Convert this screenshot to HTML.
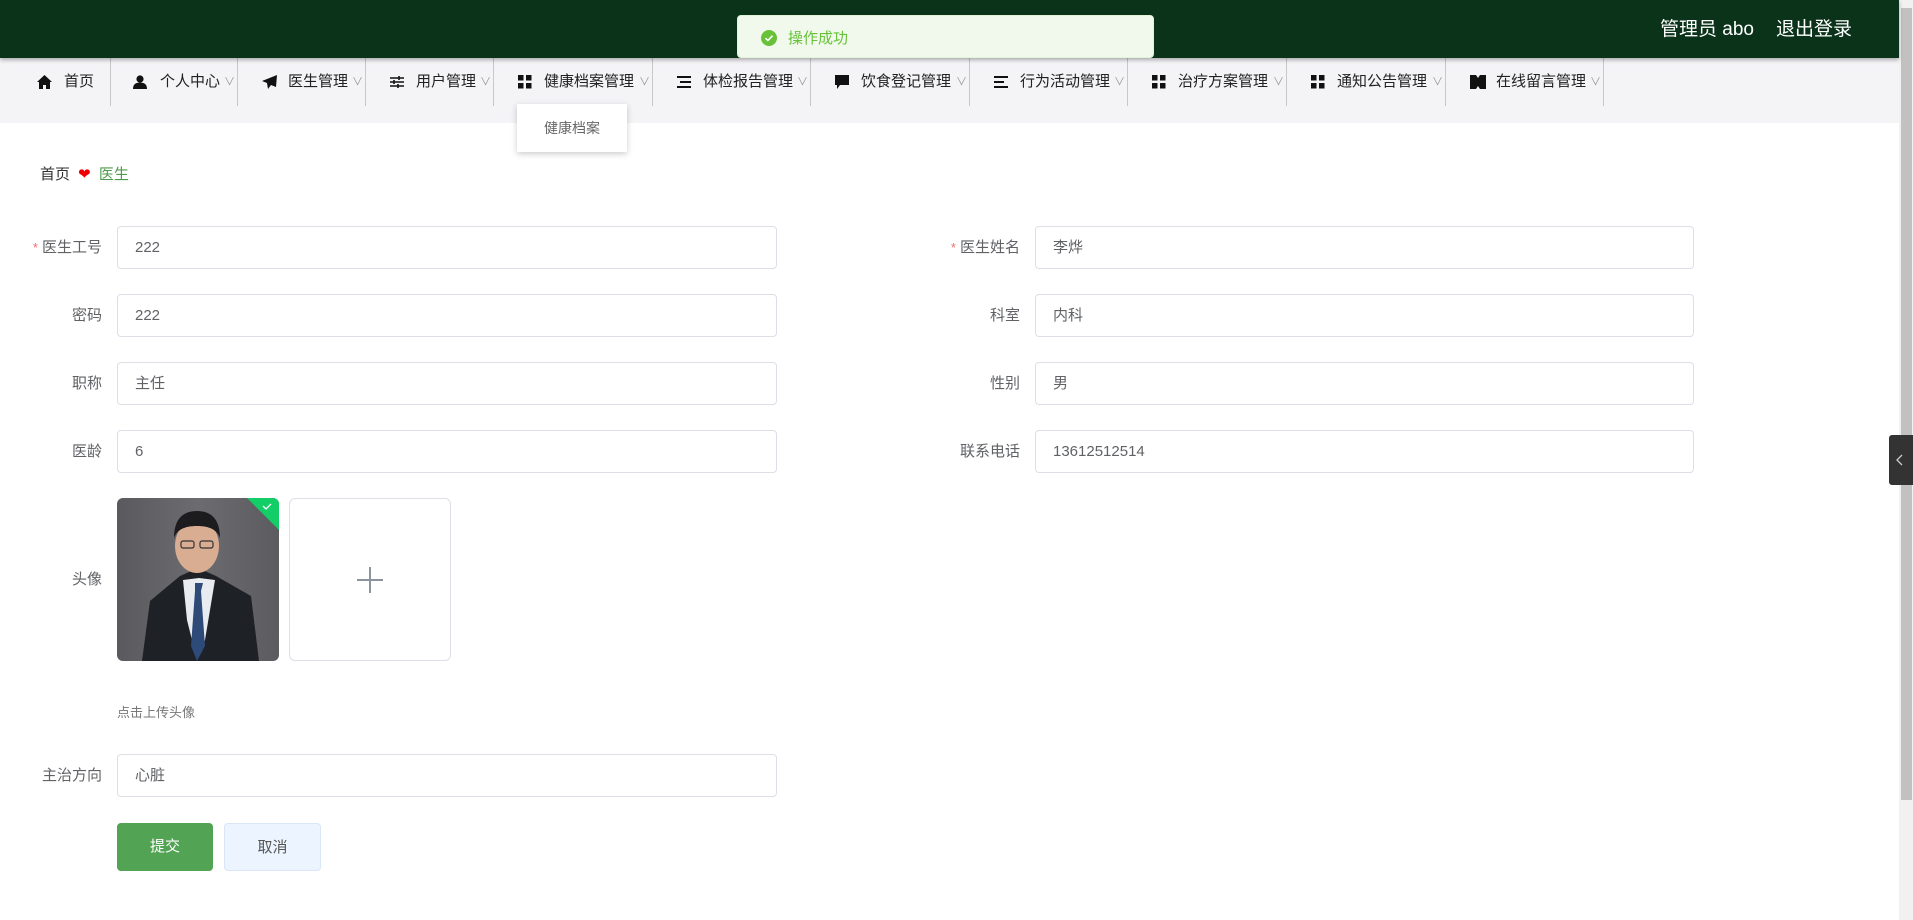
<!DOCTYPE html>
<html><head><meta charset="utf-8">
<style>
*{box-sizing:border-box;margin:0;padding:0}
body{width:1913px;height:920px;overflow:hidden;background:#fff;font-family:"Liberation Sans","Noto Sans CJK SC",sans-serif;position:relative;color:#606266}
.hdr{position:absolute;left:0;top:0;width:1899px;height:58px;background:#0b331a;box-shadow:0 2px 4px rgba(0,0,0,.3);z-index:2}
.hdr .u{position:absolute;top:14px;color:#fff;font-size:19px}
.nav{position:absolute;left:0;top:58px;width:1899px;height:65px;background:#f4f3f6}
.it{position:absolute;top:0;height:48px;border-right:1px solid #c8c8c8;font-size:15px;color:#222;line-height:48px;white-space:nowrap}
.it svg{position:absolute;top:17px}
.it .t{position:absolute}
.it .c{position:absolute;right:2px;top:0;color:#999;font-size:11px}
.toast{position:absolute;left:737px;top:15px;width:417px;height:43px;background:#f0f9eb;border:1px solid #e1f3d8;border-radius:4px;z-index:3}
.toast .d{position:absolute;left:23px;top:14px;width:16px;height:16px;border-radius:50%;background:#67c23a}
.toast span{position:absolute;left:50px;top:11px;color:#67c23a;font-size:15px}
.dd{position:absolute;left:517px;top:104px;width:110px;height:48px;background:#fff;box-shadow:0 2px 6px rgba(0,0,0,.2);font-size:14px;color:#666;line-height:48px;text-align:center}
.bc{position:absolute;left:40px;top:163px;font-size:15px;color:#303133}
.lab{position:absolute;font-size:15px;color:#606266;text-align:right;width:100px;line-height:43px}
.lab b{color:#f56c6c;font-weight:normal;margin-right:4px;font-size:13px}
.inp{position:absolute;height:43px;border:1px solid #dcdfe6;border-radius:4px;font-size:15px;color:#606266;line-height:41px;padding-left:17px}
.btn{position:absolute;top:823px;height:48px;border-radius:4px;font-size:15px;line-height:48px;text-align:center}
</style></head><body>
<div class="hdr">
<div class="u" style="left:1660px">管理员 abo</div>
<div class="u" style="left:1776px">退出登录</div>
</div>
<div class="toast"><div class="d"><svg width="16" height="16"><path d="M4.5 8.2l2.4 2.3 4.6-4.8" stroke="#fff" stroke-width="1.6" fill="none"/></svg></div><span>操作成功</span></div>
<div class="nav">
<div class="it" style="left:0;width:111px"><svg style="left:37px" width="15" height="14"><path d="M7.5 0L0 7h2v7h4v-4h3v4h4V7h2z" fill="#111"/></svg><span class="t" style="left:64px">首页</span></div>
<div class="it" style="left:111px;width:127px"><svg style="left:22px" width="14" height="14"><circle cx="7" cy="4" r="3.6" fill="#111"/><path d="M0 14c0-5 3-6.5 7-6.5s7 1.5 7 6.5z" fill="#111"/></svg><span class="t" style="left:49px">个人中心</span><span class="c">∨</span></div>
<div class="it" style="left:238px;width:128px"><svg style="left:24px" width="15" height="14"><path d="M15 0L0 6l5 2 1 6 3-4 5 2z" fill="#111"/></svg><span class="t" style="left:50px">医生管理</span><span class="c">∨</span></div>
<div class="it" style="left:366px;width:128px"><svg style="left:24px" width="14" height="14"><path d="M0 3h14M0 7h14M0 11h14" stroke="#111" stroke-width="1.4"/><path d="M9 1v4M4 5v4M8 9v4" stroke="#111" stroke-width="1.6"/></svg><span class="t" style="left:50px">用户管理</span><span class="c">∨</span></div>
<div class="it" style="left:494px;width:159px"><svg style="left:24px" width="14" height="14"><rect x="0" y="0" width="5.5" height="5.5" fill="#111"/><rect x="8" y="0" width="5.5" height="5.5" fill="#111"/><rect x="0" y="8" width="5.5" height="5.5" fill="#111"/><rect x="8" y="8" width="5.5" height="5.5" fill="#111"/></svg><span class="t" style="left:50px">健康档案管理</span><span class="c">∨</span></div>
<div class="it" style="left:653px;width:158px"><svg style="left:24px" width="14" height="14"><path d="M0 2h14M3 7h11M0 12h14" stroke="#111" stroke-width="2"/></svg><span class="t" style="left:50px">体检报告管理</span><span class="c">∨</span></div>
<div class="it" style="left:811px;width:159px"><svg style="left:24px" width="14" height="14"><path d="M0 0h14v10H5l-3 4v-4H0z" fill="#111"/></svg><span class="t" style="left:50px">饮食登记管理</span><span class="c">∨</span></div>
<div class="it" style="left:970px;width:158px"><svg style="left:24px" width="14" height="14"><path d="M0 2h14M0 7h10M0 12h14" stroke="#111" stroke-width="2"/></svg><span class="t" style="left:50px">行为活动管理</span><span class="c">∨</span></div>
<div class="it" style="left:1128px;width:159px"><svg style="left:24px" width="14" height="14"><rect x="0" y="0" width="5.5" height="5.5" fill="#111"/><rect x="8" y="0" width="5.5" height="5.5" fill="#111"/><rect x="0" y="8" width="5.5" height="5.5" fill="#111"/><rect x="8" y="8" width="5.5" height="5.5" fill="#111"/></svg><span class="t" style="left:50px">治疗方案管理</span><span class="c">∨</span></div>
<div class="it" style="left:1287px;width:159px"><svg style="left:24px" width="14" height="14"><rect x="0" y="0" width="5.5" height="5.5" fill="#111"/><rect x="8" y="0" width="5.5" height="5.5" fill="#111"/><rect x="0" y="8" width="5.5" height="5.5" fill="#111"/><rect x="8" y="8" width="5.5" height="5.5" fill="#111"/></svg><span class="t" style="left:50px">通知公告管理</span><span class="c">∨</span></div>
<div class="it" style="left:1446px;width:158px"><svg style="left:24px" width="16" height="14"><path d="M0 0h6l2 3 2-3h6v14h-6l-2-3-2 3H0z" fill="#111"/></svg><span class="t" style="left:50px">在线留言管理</span><span class="c">∨</span></div>
</div>
<div class="dd">健康档案</div>
<div class="bc">首页 <span style="color:#e00;margin:0 4px">❤</span> <span style="color:#4e9a4e">医生</span></div>

<div class="lab" style="left:2px;top:226px"><b>*</b>医生工号</div>
<div class="inp" style="left:117px;top:226px;width:660px">222</div>
<div class="lab" style="left:920px;top:226px"><b>*</b>医生姓名</div>
<div class="inp" style="left:1035px;top:226px;width:659px">李烨</div>

<div class="lab" style="left:2px;top:294px">密码</div>
<div class="inp" style="left:117px;top:294px;width:660px">222</div>
<div class="lab" style="left:920px;top:294px">科室</div>
<div class="inp" style="left:1035px;top:294px;width:659px">内科</div>

<div class="lab" style="left:2px;top:362px">职称</div>
<div class="inp" style="left:117px;top:362px;width:660px">主任</div>
<div class="lab" style="left:920px;top:362px">性别</div>
<div class="inp" style="left:1035px;top:362px;width:659px">男</div>

<div class="lab" style="left:2px;top:430px">医龄</div>
<div class="inp" style="left:117px;top:430px;width:660px">6</div>
<div class="lab" style="left:920px;top:430px">联系电话</div>
<div class="inp" style="left:1035px;top:430px;width:659px">13612512514</div>

<div class="lab" style="left:2px;top:558px">头像</div>
<div style="position:absolute;left:117px;top:498px;width:162px;height:163px;border-radius:6px;overflow:hidden;background:linear-gradient(90deg,#5a5a5e,#6c6c70 50%,#5c5c60)">
<svg width="162" height="163">
<path d="M25 163l8-60 30-25 18-8 18 8 35 20 8 65z" fill="#1e2126"/>
<path d="M66 82l16 -2 16 2 -10 60-8 20-10-40z" fill="#e8ecf0"/>
<path d="M78 85h8l-2 8 4 55-8 15-6-15 4-55z" fill="#2d4a78"/>
<ellipse cx="80" cy="48" rx="22" ry="27" fill="#d9ad92"/>
<path d="M57 40c0-20 10-27 23-27s23 7 23 27c-3-8-10-12-23-12s-20 4-23 12z" fill="#1c1c1e"/>
<rect x="64" y="43" width="13" height="7" rx="2" fill="none" stroke="#333" stroke-width="1.2"/>
<rect x="83" y="43" width="13" height="7" rx="2" fill="none" stroke="#333" stroke-width="1.2"/>
<path d="M130 0h32v32z" fill="#13ce66"/>
<path d="M146 8l3 3 5-5" stroke="#fff" stroke-width="1.3" fill="none"/>
</svg></div>
<div style="position:absolute;left:289px;top:498px;width:162px;height:163px;border:1px solid #dcdfe6;border-radius:6px"><svg style="position:absolute;left:67px;top:68px" width="26" height="26"><path d="M13 0v26M0 13h26" stroke="#8c939d" stroke-width="2"/></svg></div>
<div style="position:absolute;left:117px;top:702px;font-size:13px;color:#777">点击上传头像</div>

<div class="lab" style="left:2px;top:754px">主治方向</div>
<div class="inp" style="left:117px;top:754px;width:660px">心脏</div>

<div class="btn" style="left:117px;width:96px;background:#52a353;color:#fff">提交</div>
<div class="btn" style="left:224px;width:97px;background:#ecf5ff;border:1px solid #d9e6f5;color:#555">取消</div>

<div style="position:absolute;left:1899px;top:0;width:14px;height:920px;background:#f1f1f1"></div>
<div style="position:absolute;left:1901px;top:8px;width:11px;height:792px;background:#c1c1c1"></div>
<div style="position:absolute;left:1889px;top:435px;width:24px;height:50px;background:#333;border-radius:3px 0 0 3px"><svg style="position:absolute;left:7px;top:19px" width="8" height="12"><path d="M6 1L1 6l5 5" stroke="#ccc" stroke-width="1.3" fill="none"/></svg></div>
</body></html>
